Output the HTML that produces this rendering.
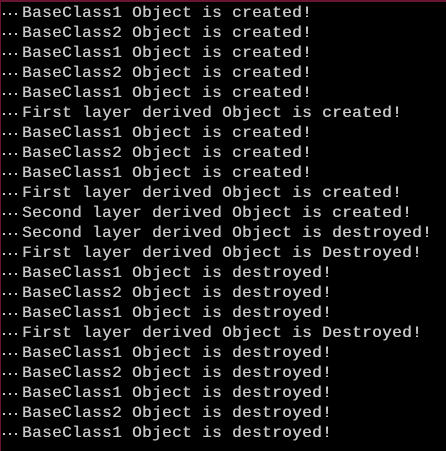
<!DOCTYPE html>
<html><head><style>
html,body{margin:0;padding:0;background:#000;}
body{width:446px;height:451px;overflow:hidden;position:relative;}
.bt{position:absolute;left:0;top:0;width:446px;height:2px;background:#6a1530;}
.bl{position:absolute;left:0;top:0;width:1px;height:451px;background:#6a1530;}
.t{position:absolute;left:2px;top:3px;font-family:"Liberation Mono",monospace;font-size:16px;letter-spacing:0.4px;line-height:20px;color:#c8c8c8;white-space:pre;text-shadow:0.4px 0 #c8c8c8;}
.d{display:inline-block;width:20px;height:20px;position:relative;vertical-align:top;}
.d:before{content:"";position:absolute;left:1px;top:10px;width:2px;height:2px;background:#c8c8c8;box-shadow:6px 0 #c8c8c8,12px 0 #c8c8c8;}
</style></head><body>
<div class="bt"></div><div class="bl"></div>
<div class="t"><span class="d"></span>BaseClass1 Object is created!
<span class="d"></span>BaseClass2 Object is created!
<span class="d"></span>BaseClass1 Object is created!
<span class="d"></span>BaseClass2 Object is created!
<span class="d"></span>BaseClass1 Object is created!
<span class="d"></span>First layer derived Object is created!
<span class="d"></span>BaseClass1 Object is created!
<span class="d"></span>BaseClass2 Object is created!
<span class="d"></span>BaseClass1 Object is created!
<span class="d"></span>First layer derived Object is created!
<span class="d"></span>Second layer derived Object is created!
<span class="d"></span>Second layer derived Object is destroyed!
<span class="d"></span>First layer derived Object is Destroyed!
<span class="d"></span>BaseClass1 Object is destroyed!
<span class="d"></span>BaseClass2 Object is destroyed!
<span class="d"></span>BaseClass1 Object is destroyed!
<span class="d"></span>First layer derived Object is Destroyed!
<span class="d"></span>BaseClass1 Object is destroyed!
<span class="d"></span>BaseClass2 Object is destroyed!
<span class="d"></span>BaseClass1 Object is destroyed!
<span class="d"></span>BaseClass2 Object is destroyed!
<span class="d"></span>BaseClass1 Object is destroyed!</div>
</body></html>
